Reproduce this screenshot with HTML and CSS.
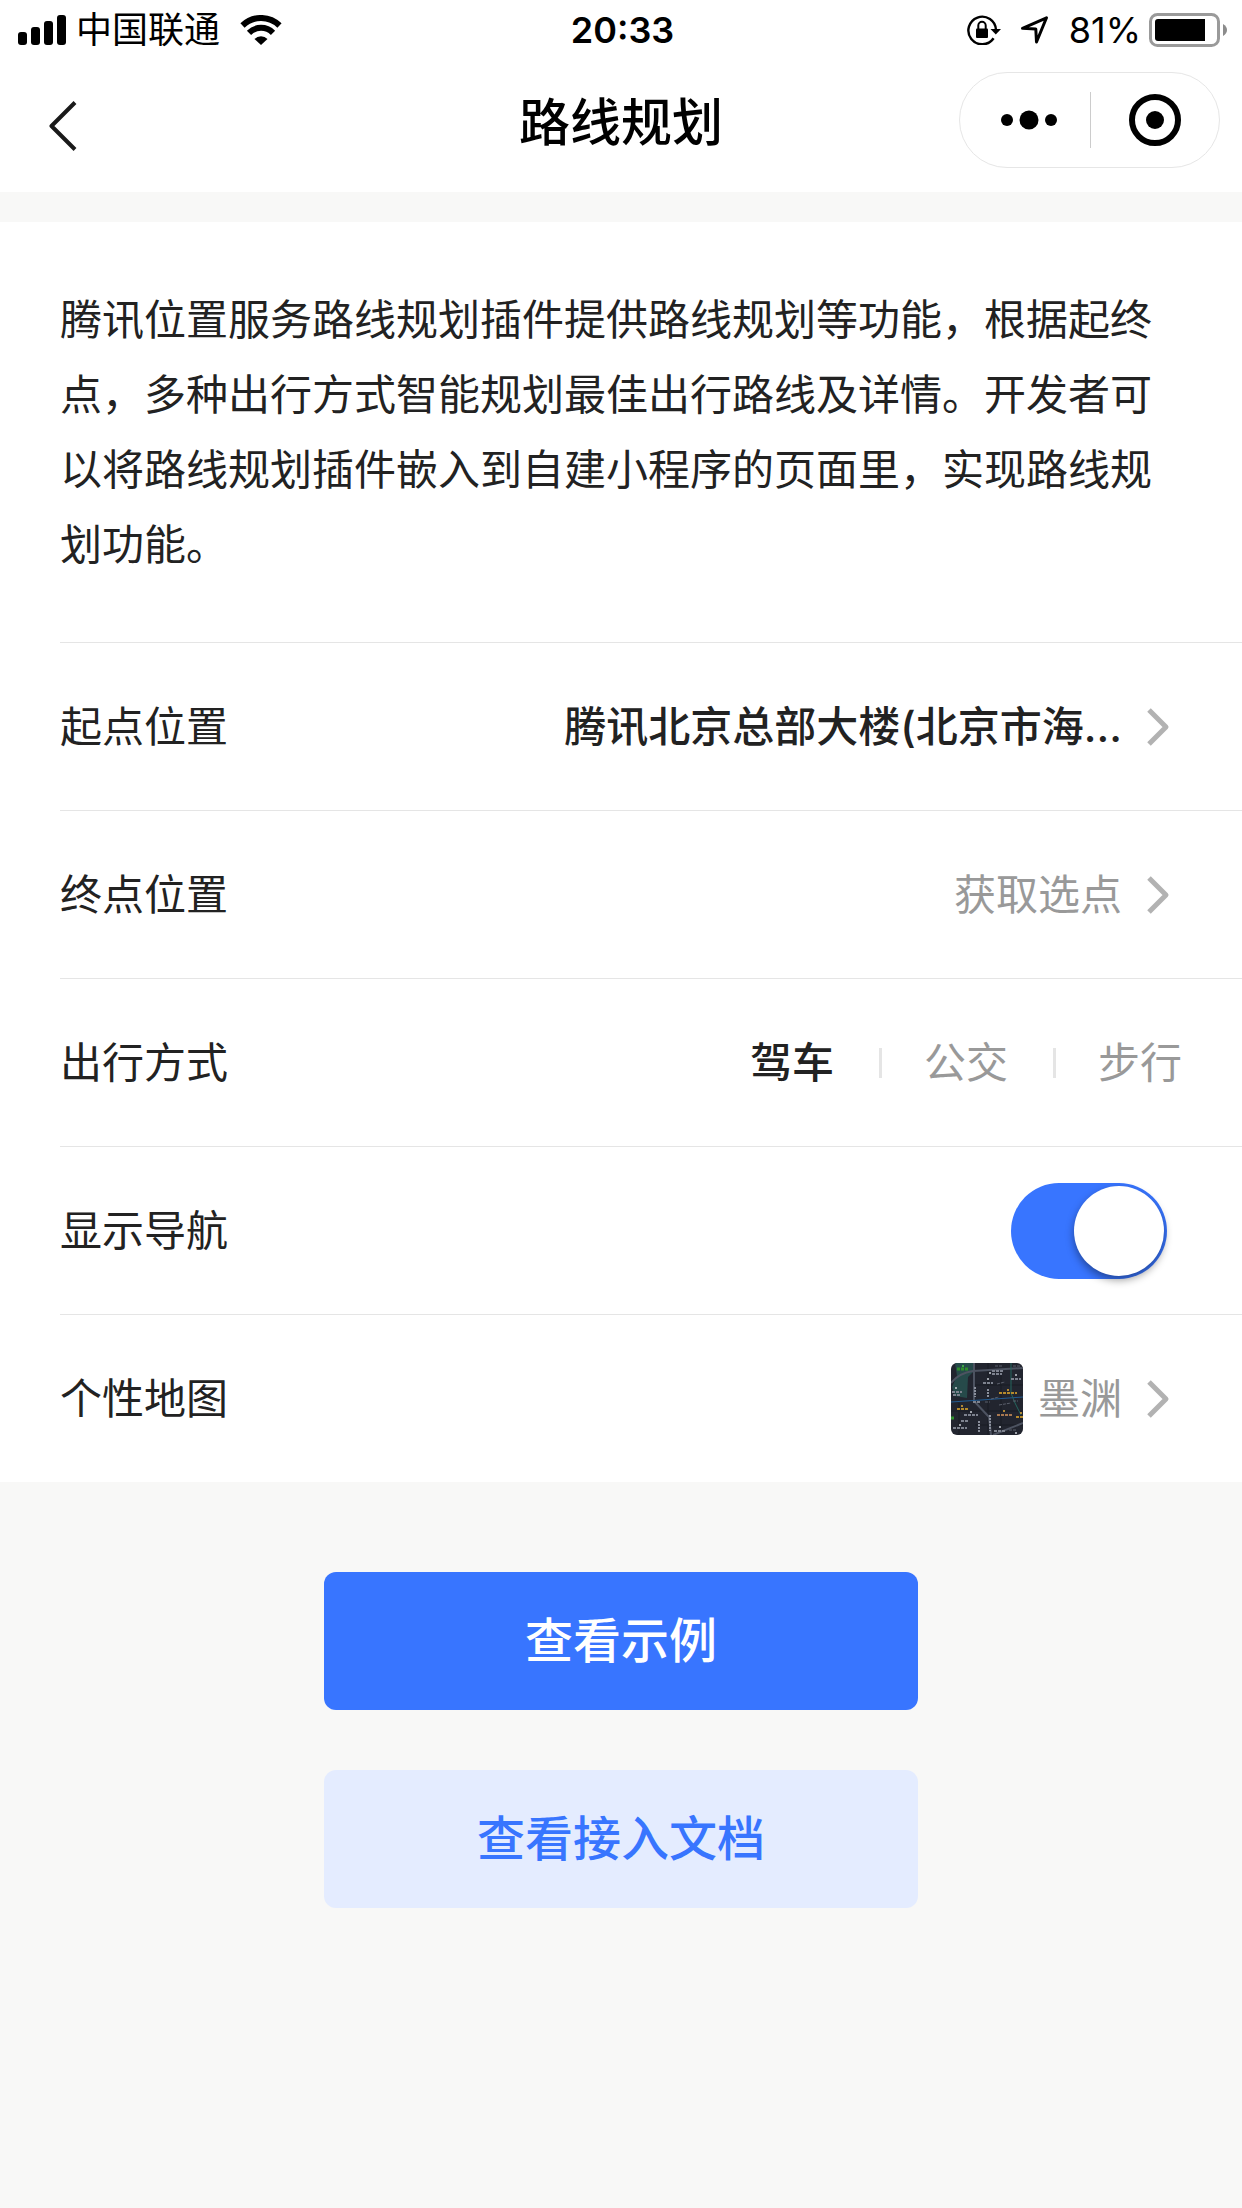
FILE: index.html
```html
<!DOCTYPE html>
<html lang="zh-CN">
<head>
<meta charset="utf-8">
<meta name="viewport" content="width=device-width, initial-scale=1">
<title>路线规划</title>
<link rel="stylesheet" href="styles.css">
</head>
<body>
<header class="top">
  <div class="status">
    <div class="status-side">
      <svg class="signal" width="48" height="30" viewBox="0 0 48 30" aria-hidden="true">
        <rect x="0" y="17" width="9" height="13" rx="3"/>
        <rect x="13" y="12" width="9" height="18" rx="3"/>
        <rect x="26" y="6" width="9" height="24" rx="3"/>
        <rect x="39" y="0" width="9" height="30" rx="3"/>
      </svg>
      <span class="carrier">中国联通</span>
      <svg class="wifi" width="42" height="30" viewBox="0 0 42 30" aria-hidden="true">
        <path d="M2.500 10.500A26.500 26.500 0 0 1 39.500 10.500" fill="none" stroke="#000" stroke-width="6"/>
        <path d="M9 17.800A17 17 0 0 1 33 17.800" fill="none" stroke="#000" stroke-width="6"/>
        <path d="M14.500 24A9 9 0 0 1 27.500 24L21 30Z"/>
      </svg>
    </div>
    <time class="clock">20:33</time>
    <div class="status-side status-right">
      <svg width="34" height="30" viewBox="0 0 34 30" aria-hidden="true">
        <path d="M26.600 23.300A13.800 13.800 0 1 1 29 15" fill="none" stroke="#000" stroke-width="2.400"/>
        <path d="M23.500 14H34L28.800 19.500Z"/>
        <rect x="9" y="13.500" width="12" height="9.500" rx="1"/>
        <path d="M11.300 14v-3.500a3.700 3.700 0 0 1 7.400 0V14" fill="none" stroke="#000" stroke-width="2"/>
      </svg>
      <svg width="28" height="28" viewBox="0 0 28 28" aria-hidden="true">
        <path d="M1.500 12.300L25.500 1.800L15.500 26L14.800 13Z" fill="none" stroke="#000" stroke-width="3" stroke-linejoin="round"/>
      </svg>
      <span class="percent">81%</span>
      <svg width="78" height="34" viewBox="0 0 78 34" aria-hidden="true">
        <rect x="1.500" y="1.500" width="68" height="31" rx="7" fill="none" stroke="#9a9a9a" stroke-width="3"/>
        <path d="M6 9a3 3 0 0 1 3-3h47v22H9a3 3 0 0 1-3-3Z"/>
        <path d="M74 11Q78 13.500 78 17T74 23Z" fill="#8c8c8c"/>
      </svg>
    </div>
  </div>
  <nav class="nav">
    <button class="back" type="button" aria-label="返回">
      <svg width="28" height="50" viewBox="0 0 28 50" aria-hidden="true">
        <path d="M26 1.500L2.500 25L26 48.500" fill="none" stroke="#1a1a1a" stroke-width="4" stroke-linejoin="round"/>
      </svg>
    </button>
    <h1 class="title">路线规划</h1>
    <div class="capsule">
      <button type="button" class="capsule-btn more" aria-label="更多">
        <svg width="56" height="20" viewBox="0 0 56 20" aria-hidden="true">
          <circle cx="6" cy="10" r="6"/><circle cx="28" cy="10" r="9.500"/><circle cx="50" cy="10" r="6"/>
        </svg>
      </button>
      <button type="button" class="capsule-btn" aria-label="关闭">
        <svg width="52" height="52" viewBox="0 0 52 52" aria-hidden="true">
          <circle cx="26" cy="26" r="23" fill="none" stroke="#000" stroke-width="6"/><circle cx="26" cy="26" r="9"/>
        </svg>
      </button>
    </div>
  </nav>
</header>

<main>
  <section class="panel">
    <p class="intro">腾讯位置服务路线规划插件提供路线规划等功能，根据起终点，多种出行方式智能规划最佳出行路线及详情。开发者可以将路线规划插件嵌入到自建小程序的页面里，实现路线规划功能。</p>
    <div class="rows">
      <a class="row" href="#start">
        <span>起点位置</span>
        <span class="value chosen">腾讯北京总部大楼(北京市海...</span>
        <svg class="chevron" width="24" height="40" viewBox="0 0 24 40" aria-hidden="true"><path d="M3 3L20 20L3 37"/></svg>
      </a>
      <a class="row" href="#end">
        <span>终点位置</span>
        <span class="value">获取选点</span>
        <svg class="chevron" width="24" height="40" viewBox="0 0 24 40" aria-hidden="true"><path d="M3 3L20 20L3 37"/></svg>
      </a>
      <div class="row row-modes">
        <span id="mode-label">出行方式</span>
        <div class="modes" role="radiogroup" aria-labelledby="mode-label">
          <label class="mode"><input type="radio" name="mode" checked><span>驾车</span></label>
          <label class="mode"><input type="radio" name="mode"><span>公交</span></label>
          <label class="mode"><input type="radio" name="mode"><span>步行</span></label>
        </div>
      </div>
      <div class="row row-switch">
        <label for="show-nav">显示导航</label>
        <input class="switch" id="show-nav" type="checkbox" role="switch" checked>
      </div>
      <a class="row" href="#map-style">
        <span>个性地图</span>
        <span class="value map-value">
          <svg class="thumb" width="72" height="72" viewBox="0 0 72 72" aria-hidden="true">
            <rect width="72" height="72" fill="#22252f"/>
            <path d="M4 0H23V8L17 14L16 35L4 33L1 24L6 13Z" fill="#264a4a"/>
            <path d="M37 0V72M0 48H72M50 8V66M24 22H72M8 40V72M24 62H72" fill="none" stroke="#191c25" stroke-width="1"/>
            <path d="M0 20Q8 10 22 8L72 5M23 0V38L38 54L40 72M42 72L72 60" fill="none" stroke="#4d5361" stroke-width="2"/>
            <path d="M0 39L30 37L72 34" fill="none" stroke="#235c92" stroke-width="1"/>
            <path d="M60 0V30L64 40L70 52" fill="none" stroke="#24675f" stroke-width="1"/>
            <path d="M24 24V34M39 52V68M37 26V34M28 58V70" fill="none" stroke="#8b909c" stroke-width="2" stroke-dasharray="2 1"/>
            <g fill="none" stroke="#7d828e" stroke-width="2" stroke-dasharray="3 1">
              <path d="M41 8H52M41 11H51M32 20H42M60 16H70M1 29H11M2 32H9M13 52H27M2 65H16M43 68H55M22 39H29M10 58H18"/>
            </g>
            <g fill="none" stroke="#5b606c" stroke-dasharray="3 1">
              <path d="M46 21L54 19M40 36L48 34M48 42L60 40M62 38H67M34 39H39M58 67H66M44 3H52M62 3H70"/>
            </g>
            <path d="M6 6H17M0 55H4" stroke="#2f8f2d" stroke-width="3" stroke-dasharray="3 1"/>
            <path d="M48 30H66M6 46H17M65 54H72" stroke="#b58a2c" stroke-width="2" stroke-dasharray="3 1"/>
            <path d="M46 52H61" stroke="#a87850" stroke-width="2" stroke-dasharray="3 1"/>
            <g fill="#c8ccd4">
              <circle cx="39" cy="10" r="1"/><circle cx="37" cy="16" r="1"/><circle cx="65" cy="12" r="1"/>
              <circle cx="5" cy="25" r="1"/><circle cx="20" cy="49" r="1"/><circle cx="9" cy="62" r="1"/>
              <circle cx="49" cy="64" r="1"/><circle cx="65" cy="70" r="1"/>
            </g>
            <g fill="#e0a93a">
              <circle cx="57" cy="27" r="1"/><circle cx="11" cy="43" r="1"/><circle cx="53" cy="48" r="1"/><circle cx="70" cy="50" r="1"/>
            </g>
            <circle cx="12" cy="3" r="1" fill="#4cc94a"/>
          </svg>
          墨渊
        </span>
        <svg class="chevron" width="24" height="40" viewBox="0 0 24 40" aria-hidden="true"><path d="M3 3L20 20L3 37"/></svg>
      </a>
    </div>
  </section>
  <div class="actions">
    <button class="btn primary" type="button">查看示例</button>
    <button class="btn secondary" type="button">查看接入文档</button>
  </div>
</main>
</body>
</html>
```

FILE: styles.css
```css
* { box-sizing: border-box; }

body {
  margin: 0;
  background: #f8f8f7;
  color: #222;
  font-family: Inter, "Noto Sans CJK SC", sans-serif;
  font-size: 42px;
  line-height: 60px;
}

svg { display: block; flex: none; }
button { border: 0; padding: 0; background: none; color: inherit; font: inherit; cursor: pointer; }
a { color: inherit; text-decoration: none; }

.top { background: #fff; color: #000; }

.status {
  display: grid;
  grid-template-columns: 1fr auto 1fr;
  align-items: center;
  height: 60px;
  padding: 0 15px 0 18px;
  font-size: 36px;
}
.status-side { display: flex; align-items: center; }
.status-right { justify-content: flex-end; }
.carrier { margin: 0 20px 0 10px; }
.clock { font-weight: 600; }
.percent { margin: 0 8px 0 20px; }
.status-right svg + svg { margin-left: 20px; }

.nav {
  display: grid;
  grid-template-columns: 1fr auto 1fr;
  height: 132px;
  padding: 0 22px;
}
.back { display: flex; align-items: center; justify-self: start; width: 120px; height: 132px; padding-left: 27px; }
.title { margin: 0; font-size: 51px; font-weight: 500; line-height: 126px; }
.capsule {
  display: flex;
  align-items: center;
  justify-self: end;
  width: 261px;
  height: 96px;
  margin-top: 12px;
  border: 1px solid #e6e6e6;
  border-radius: 48px;
}
.capsule-btn { display: flex; width: 50%; align-items: center; justify-content: center; height: 56px; }
.capsule-btn + .capsule-btn { border-left: 1px solid #ccc; }
.more { padding-left: 8px; }

.panel { margin-top: 30px; background: #fff; }
.intro { margin: 0; padding: 60px; line-height: 75px; }

.rows { padding-left: 60px; }
.row {
  display: flex;
  align-items: center;
  height: 168px;
  padding-right: 72px;
  border-top: 1px solid #e5e5e5;
}
.row-modes { justify-content: space-between; padding-right: 60px; }
.row-switch { justify-content: space-between; padding-right: 75px; }
.value { margin: 0 24px 0 auto; color: #999; }
.chosen { color: #222; font-weight: 500; }
.map-value { display: flex; align-items: center; gap: 15px; }
.thumb { border-radius: 6px; }
.chevron path { fill: none; stroke: #b2b2b2; stroke-width: 5px; stroke-linejoin: round; }

.modes { display: flex; align-items: center; }
.mode { display: flex; align-items: center; color: #999; cursor: pointer; }
.mode input { position: absolute; opacity: 0; }
.mode:has(input:checked) { color: #222; font-weight: 500; }
.mode + .mode::before { content: ""; width: 3px; height: 30px; margin: 0 42px 0 45px; background: #e5e5e5; }

.switch {
  display: flex;
  justify-content: flex-end;
  width: 156px;
  height: 96px;
  margin: 0;
  padding: 3px;
  appearance: none;
  border-radius: 48px;
  background: #3875ff;
  cursor: pointer;
}
.switch::before {
  content: "";
  width: 90px;
  height: 90px;
  border-radius: 50%;
  background: #fff;
  box-shadow: 0 4px 9px rgba(0, 0, 0, .4);
}
.switch:not(:checked) { justify-content: flex-start; background: #ddd; }

.actions { display: flex; flex-direction: column; align-items: center; gap: 60px; padding: 90px 60px; }
.btn { width: 594px; max-width: 100%; height: 138px; border-radius: 12px; font-size: 48px; font-weight: 500; }
.primary { background: #3875ff; color: #fff; }
.secondary { background: #e4ecff; color: #3875ff; }
```
